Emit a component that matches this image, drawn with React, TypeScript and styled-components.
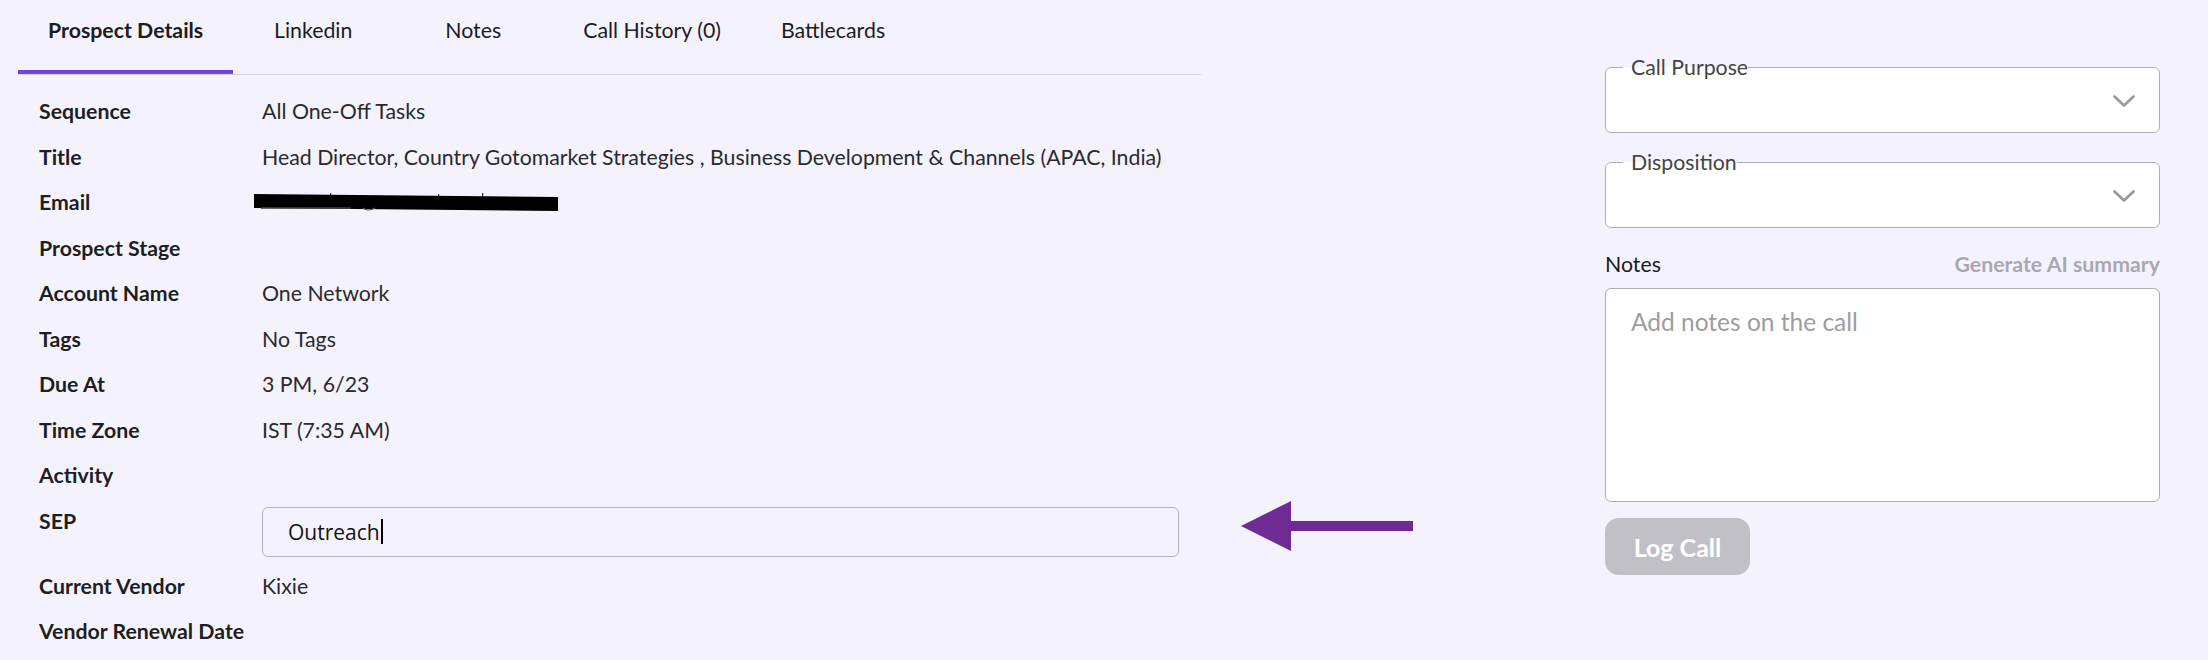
import React from "react";
import styled, { createGlobalStyle } from "styled-components";

const GlobalStyle = createGlobalStyle`
  html, body {
    margin: 0;
    padding: 0;
    background: #f4f3fd;
  }
  body {
    font-family: Lato, "Noto Sans", sans-serif;
    color: #222;
  }
`;

const Page = styled.div`
  display: flex;
  align-items: flex-start;
  width: 2208px;
  height: 660px;
  overflow: hidden;
`;

/* ---------- left: tabs + prospect details ---------- */

const LeftPanel = styled.section`
  width: 1183px;
  margin-left: 18px;
  display: flex;
  flex-direction: column;
`;

const TabList = styled.nav`
  display: flex;
  border-bottom: 1px solid #d7d4e2;
`;

const Tab = styled.div<{ $active?: boolean }>`
  box-sizing: border-box;
  min-width: 160px;
  height: 74px;
  padding: 16px 30px 0;
  text-align: center;
  white-space: nowrap;
  font-size: 21.3px;
  line-height: 28px;
  font-weight: ${(p) => (p.$active ? 700 : 400)};
  color: #1c1c1c;
  border-bottom: 4px solid ${(p) => (p.$active ? "#6b46e1" : "transparent")};
`;

const Details = styled.div`
  display: flex;
  flex-direction: column;
  padding: 14px 0 0 21px;
`;

const Row = styled.div`
  display: grid;
  grid-template-columns: 223px 1fr;
  align-items: start;
  padding: 7px 0;
`;

const Label = styled.div`
  font-size: 21.3px;
  line-height: 31.5px;
  font-weight: 700;
  color: #1e1e1e;
  white-space: nowrap;
`;

const Value = styled.div`
  font-size: 21.3px;
  line-height: 31.5px;
  color: #2a2a2a;
  white-space: nowrap;
`;

const Redaction = styled.svg`
  display: block;
  margin: 6px 0 0 -9px;
`;

const TextBox = styled.div`
  box-sizing: border-box;
  width: 917px;
  height: 50px;
  margin-top: 1px;
  display: flex;
  align-items: center;
  padding-left: 25px;
  border: 1px solid #b4b2ba;
  border-radius: 6px;
  font-family: "Open Sans", sans-serif;
  font-size: 21px;
  color: #111;
`;

const Caret = styled.span`
  display: inline-block;
  width: 2px;
  height: 25px;
  margin-left: 1px;
  background: #000;
`;

/* ---------- middle: pointer arrow ---------- */

const ArrowColumn = styled.div`
  width: 172px;
  margin-left: 40px;
  padding-top: 501px;
`;

/* ---------- right: call logging form ---------- */

const RightPanel = styled.aside`
  width: 555px;
  margin-left: 192px;
  padding-top: 54px;
  display: flex;
  flex-direction: column;
`;

const SelectField = styled.fieldset<{ $gap?: number }>`
  margin: ${(p) => p.$gap ?? 0}px 0 0;
  padding: 0 24px 0 17px;
  border: 1px solid #aeadb3;
  border-radius: 6px;
  background: #fff;
  min-width: 0;
`;

const Legend = styled.legend`
  padding: 0 0 0 8px;
  font-size: 21.3px;
  line-height: 26px;
  color: #444;
`;

const SelectBody = styled.div`
  box-sizing: border-box;
  height: 52px;
  padding-top: 15px;
  display: flex;
  justify-content: flex-end;
  align-items: flex-start;
`;

const NotesHeader = styled.div`
  margin-top: 22px;
  display: flex;
  justify-content: space-between;
  align-items: center;
  line-height: 28px;
  font-size: 21.3px;
`;

const NotesTitle = styled.span`
  color: #1a1a1a;
`;

const SummaryLink = styled.span`
  color: #a9a8ae;
  font-weight: 700;
`;

const NotesArea = styled.textarea`
  box-sizing: border-box;
  margin-top: 10px;
  width: 555px;
  height: 214px;
  padding: 17px 25px;
  border: 1px solid #aeadb3;
  border-radius: 6px;
  background: #fff;
  resize: none;
  font-family: Lato, sans-serif;
  font-size: 24.5px;
  line-height: 32px;
  outline: none;
  &::placeholder {
    color: #9d9ca1;
  }
`;

const LogButton = styled.button`
  margin-top: 16px;
  width: 145px;
  height: 57px;
  border: none;
  border-radius: 14px;
  background: #c1c0c7;
  color: #fff;
  font-family: Lato, sans-serif;
  font-size: 25px;
  font-weight: 700;
`;

const Chevron = () => (
  <svg width="22" height="13" viewBox="0 0 22 13" aria-hidden="true">
    <polyline
      points="1.5,1.5 11,10.5 20.5,1.5"
      fill="none"
      stroke="#9b9b9f"
      strokeWidth="2.8"
      strokeLinecap="round"
      strokeLinejoin="round"
    />
  </svg>
);

const tabs = ["Prospect Details", "Linkedin", "Notes", "Call History (0)", "Battlecards"];

const details: { label: string; value?: string }[] = [
  { label: "Sequence", value: "All One-Off Tasks" },
  {
    label: "Title",
    value:
      "Head Director, Country Gotomarket Strategies , Business Development & Channels (APAC, India)",
  },
  { label: "Email" },
  { label: "Prospect Stage", value: "" },
  { label: "Account Name", value: "One Network" },
  { label: "Tags", value: "No Tags" },
  { label: "Due At", value: "3 PM, 6/23" },
  { label: "Time Zone", value: "IST (7:35 AM)" },
  { label: "Activity", value: "" },
  { label: "SEP" },
  { label: "Current Vendor", value: "Kixie" },
  { label: "Vendor Renewal Date", value: "" },
];

function renderValue(label: string, value?: string) {
  if (label === "Email") {
    return (
      <Redaction width="306" height="20" viewBox="0 0 306 20" aria-hidden="true">
        <rect x="77" y="0" width="1.2" height="3" fill="#333" />
        <rect x="185" y="1" width="1.2" height="3" fill="#333" />
        <rect x="229" y="0" width="1.2" height="4" fill="#333" />
        <path d="M1 1 L305 4 L305 18 L1 15 Z" fill="#000" />
        <path d="M110 15 q5 4 12 0" stroke="#555" strokeWidth="1.2" fill="none" />
        <path d="M8 15 h90" stroke="#444" strokeWidth="1.5" />
      </Redaction>
    );
  }
  if (label === "SEP") {
    return (
      <TextBox>
        Outreach
        <Caret />
      </TextBox>
    );
  }
  return <Value>{value}</Value>;
}

export default function App() {
  return (
    <>
      <GlobalStyle />
      <Page>
        <LeftPanel>
          <TabList>
            {tabs.map((t, i) => (
              <Tab key={t} $active={i === 0}>
                {t}
              </Tab>
            ))}
          </TabList>
          <Details>
            {details.map((d) => (
              <Row key={d.label}>
                <Label>{d.label}</Label>
                {renderValue(d.label, d.value)}
              </Row>
            ))}
          </Details>
        </LeftPanel>

        <ArrowColumn>
          <svg width="172" height="50" viewBox="0 0 172 50" aria-hidden="true">
            <polygon points="0,25 50,0 50,20 172,20 172,30 50,30 50,50" fill="#702a96" />
          </svg>
        </ArrowColumn>

        <RightPanel>
          <SelectField>
            <Legend>Call Purpose</Legend>
            <SelectBody>
              <Chevron />
            </SelectBody>
          </SelectField>
          <SelectField $gap={16}>
            <Legend>Disposition</Legend>
            <SelectBody>
              <Chevron />
            </SelectBody>
          </SelectField>
          <NotesHeader>
            <NotesTitle>Notes</NotesTitle>
            <SummaryLink>Generate AI summary</SummaryLink>
          </NotesHeader>
          <NotesArea placeholder="Add notes on the call" />
          <LogButton type="button">Log Call</LogButton>
        </RightPanel>
      </Page>
    </>
  );
}
